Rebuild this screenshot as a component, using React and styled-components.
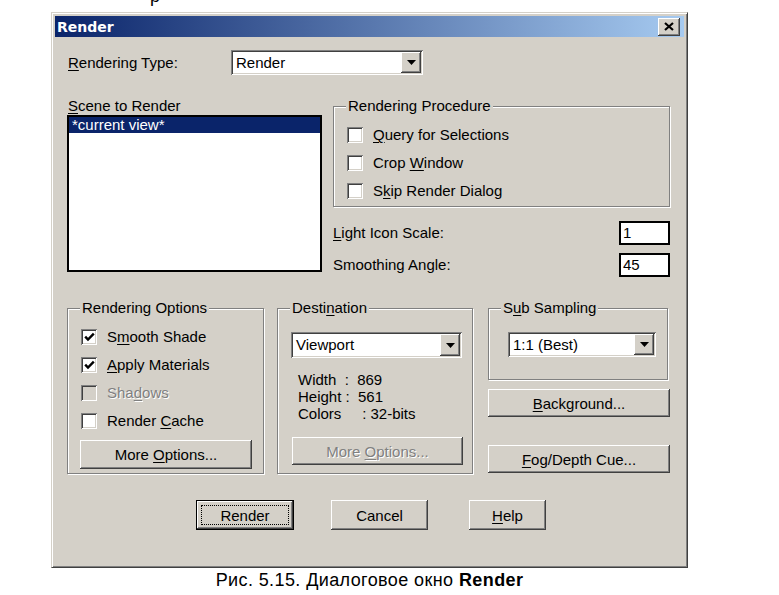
import React from "react";
import styled, { createGlobalStyle, css } from "styled-components";

const FACE = "#d4d0c8";
const SHADOW = "#808080";
const DARK = "#404040";
const HILITE = "#ffffff";
const NAVY = "#0a246a";

const GlobalStyle = createGlobalStyle`
  html, body { margin: 0; padding: 0; background: #ffffff; }
  body { font-family: "Liberation Sans", Arial, sans-serif; color: #000; }
  * { box-sizing: border-box; }
`;

const raised = css`
  background: ${FACE};
  box-shadow: inset -1px -1px ${DARK}, inset 1px 1px ${HILITE},
    inset -2px -2px ${SHADOW}, inset 2px 2px ${FACE};
`;

const sunken = css`
  box-shadow: inset 1px 1px ${SHADOW}, inset -1px -1px ${HILITE},
    inset 2px 2px ${DARK}, inset -2px -2px ${FACE};
`;

const Page = styled.div`
  width: 779px;
  height: 595px;
  overflow: hidden;
  padding-left: 51px;
`;

const Fragment = styled.div`
  height: 12px;
  overflow: hidden;
  padding-left: 99px;
  font-size: 18px;
  line-height: 12px;
`;

const FragmentText = styled.div`
  margin-top: -10px;
`;

const Window = styled.div`
  width: 637px;
  height: 556px;
  background: ${FACE};
  border: 1px solid;
  border-color: ${FACE} ${DARK} ${DARK} ${FACE};
  box-shadow: inset 1px 1px ${HILITE}, inset -1px -1px ${SHADOW};
  padding: 3px;
  display: flex;
  flex-direction: column;
`;

const TitleBar = styled.div`
  height: 21px;
  flex: none;
  background: linear-gradient(to right, ${NAVY}, #a6caf0);
  display: flex;
  align-items: center;
  justify-content: space-between;
  padding: 0 4px 0 2px;
`;

const Title = styled.span`
  font: bold 14px "DejaVu Sans", Verdana, sans-serif;
  color: #fff;
`;

const CloseButton = styled.div`
  width: 22px;
  height: 18px;
  ${raised};
  display: flex;
  align-items: center;
  justify-content: center;
`;

const Client = styled.div`
  flex: 1;
  padding: 13px 14px 0 12px;
  display: flex;
  flex-direction: column;
  font-size: 15px;
  line-height: 16px;

  u {
    text-decoration-thickness: 1px;
    text-underline-offset: 2px;
  }
`;

const TypeRow = styled.div`
  display: flex;
  align-items: center;
  height: 25px;
`;

const TypeLabel = styled.span`
  width: 164px;
  padding-left: 1px;
`;

const Select = styled.div`
  width: ${(p) => p.$w}px;
  height: ${(p) => p.$h}px;
  margin-top: ${(p) => p.$mt || 0}px;
  margin-left: ${(p) => p.$ml || 0}px;
  background: #fff;
  ${sunken};
  padding: 2px;
  display: flex;
  align-items: center;
  flex: none;
`;

const SelectText = styled.span`
  flex: 1;
  padding-left: 3px;
`;

const ArrowButton = styled.span`
  width: 20px;
  align-self: stretch;
  ${raised};
  display: flex;
  align-items: center;
  justify-content: center;
`;

const MiddleRow = styled.div`
  display: grid;
  grid-template-columns: 255px 337px;
  column-gap: 11px;
  margin-top: 23px;
`;

const Column = styled.div`
  display: flex;
  flex-direction: column;
`;

const PlainLabel = styled.div`
  height: 16px;
  padding-left: ${(p) => p.$pl || 0}px;
`;

const ListBox = styled.div`
  margin-top: 1px;
  height: 157px;
  background: #fff;
  border: 2px solid #000;
`;

const ListItem = styled.div`
  height: 16px;
  line-height: 16px;
  background: ${NAVY};
  color: #fff;
  padding-left: 3px;
`;

const Group = styled.div`
  margin-top: 8px;
  border: 1px solid ${SHADOW};
  box-shadow: inset 1px 1px ${HILITE}, 1px 1px ${HILITE};
  height: ${(p) => p.$h}px;
  display: flex;
  flex-direction: column;
`;

const GroupTitle = styled.div`
  margin: -9px 0 0 12px;
  padding: 0 2px;
  width: fit-content;
  height: 16px;
  line-height: 16px;
  background: ${FACE};
`;

const GroupBody = styled.div`
  padding: ${(p) => p.$pt || 0}px 0 0 ${(p) => p.$pl || 0}px;
  display: flex;
  flex-direction: column;
`;

const CheckRow = styled.div`
  display: flex;
  align-items: center;
  gap: 10px;
  height: 28px;
  color: ${(p) => (p.$disabled ? SHADOW : "#000")};
  text-shadow: ${(p) => (p.$disabled ? `1px 1px ${HILITE}` : "none")};
`;

const Box = styled.span`
  width: 16px;
  height: 16px;
  flex: none;
  background: ${(p) => (p.$disabled ? FACE : "#fff")};
  ${sunken};
  display: flex;
  align-items: center;
  justify-content: center;
`;

const FieldRow = styled.div`
  display: flex;
  align-items: center;
  justify-content: space-between;
  height: 24px;
  margin-top: ${(p) => p.$mt}px;
`;

const FieldInput = styled.div`
  width: 51px;
  height: 24px;
  background: #fff;
  border: 2px solid #000;
  padding-left: 2px;
  line-height: 20px;
`;

const BottomRow = styled.div`
  display: grid;
  grid-template-columns: 197px 196px 182px;
  column-gap: 13px;
  margin-top: 23px;
  grid-template-areas: "a b c";
  & > :nth-child(2) {
    margin-left: 0;
  }
`;

const SideStack = styled.div`
  display: flex;
  flex-direction: column;
  margin-left: 2px;
`;

const InfoText = styled.div`
  margin: 13px 0 0 7px;
  white-space: pre;
  line-height: 17px;
`;

const Button = styled.button`
  ${raised};
  border: none;
  padding: 0;
  font: 15px "Liberation Sans", Arial, sans-serif;
  width: ${(p) => p.$w}px;
  height: ${(p) => p.$h}px;
  margin-top: ${(p) => p.$mt || 0}px;
  margin-left: ${(p) => p.$ml || 0}px;
  flex: none;
  display: flex;
  align-items: center;
  justify-content: center;
  color: #000;

  &:disabled {
    color: ${SHADOW};
    text-shadow: 1px 1px ${HILITE};
  }

  ${(p) =>
    p.$default &&
    css`
      border: 1px solid #000;
      box-shadow: inset -1px -1px ${DARK}, inset 1px 1px ${HILITE},
        inset -2px -2px ${SHADOW}, inset 2px 2px ${FACE};
    `}
`;

const FocusRect = styled.span`
  display: flex;
  align-items: center;
  justify-content: center;
  width: calc(100% - 8px);
  height: calc(100% - 8px);
  border: 1px dotted #000;
`;

const ActionRow = styled.div`
  display: flex;
  align-items: center;
  margin-top: 26px;
  padding-left: 129px;
`;

const Caption = styled.div`
  width: 637px;
  text-align: center;
  font-size: 18px;
  line-height: 22px;
  letter-spacing: 0.4px;
  margin-top: 1px;

  b {
    font-weight: bold;
  }
`;

const Arrow = () => (
  <svg width="9" height="5" viewBox="0 0 9 5">
    <polygon points="0,0 9,0 4.5,5" fill="#000" />
  </svg>
);

const Check = () => (
  <svg width="11" height="10" viewBox="0 0 11 10">
    <polyline
      points="1.2,4.6 4,7.6 9.8,1.6"
      fill="none"
      stroke="#000"
      strokeWidth="2.4"
    />
  </svg>
);

const CloseGlyph = () => (
  <svg width="10" height="9" viewBox="0 0 10 9">
    <path d="M1 1 L9 8 M9 1 L1 8" stroke="#000" strokeWidth="2.2" />
  </svg>
);

const Checkbox = ({ checked, disabled, children }) => (
  <CheckRow $disabled={disabled}>
    <Box $disabled={disabled}>{checked && <Check />}</Box>
    <span>{children}</span>
  </CheckRow>
);

const Dropdown = ({ w, h, mt, ml, children }) => (
  <Select $w={w} $h={h} $mt={mt} $ml={ml}>
    <SelectText>{children}</SelectText>
    <ArrowButton>
      <Arrow />
    </ArrowButton>
  </Select>
);

export default function App() {
  return (
    <Page>
      <GlobalStyle />
      <Fragment>
        <FragmentText>р</FragmentText>
      </Fragment>
      <Window>
        <TitleBar>
          <Title>Render</Title>
          <CloseButton>
            <CloseGlyph />
          </CloseButton>
        </TitleBar>
        <Client>
          <TypeRow>
            <TypeLabel>
              <u>R</u>endering Type:
            </TypeLabel>
            <Dropdown w={192} h={25}>
              Render
            </Dropdown>
          </TypeRow>

          <MiddleRow>
            <Column>
              <PlainLabel $pl={1}>
                <u>S</u>cene to Render
              </PlainLabel>
              <ListBox>
                <ListItem>*current view*</ListItem>
              </ListBox>
            </Column>
            <Column>
              <Group $h={101}>
                <GroupTitle>Rendering Procedure</GroupTitle>
                <GroupBody $pt={7} $pl={13}>
                  <Checkbox>
                    <u>Q</u>uery for Selections
                  </Checkbox>
                  <Checkbox>
                    Crop <u>W</u>indow
                  </Checkbox>
                  <Checkbox>
                    S<u>k</u>ip Render Dialog
                  </Checkbox>
                </GroupBody>
              </Group>
              <FieldRow $mt={14}>
                <span>
                  <u>L</u>ight Icon Scale:
                </span>
                <FieldInput>1</FieldInput>
              </FieldRow>
              <FieldRow $mt={8}>
                <span>Smoothing Angle:</span>
                <FieldInput>45</FieldInput>
              </FieldRow>
            </Column>
          </MiddleRow>

          <BottomRow>
            <Group $h={166}>
              <GroupTitle>Rendering Options</GroupTitle>
              <GroupBody $pt={7} $pl={13}>
                <Checkbox checked>
                  S<u>m</u>ooth Shade
                </Checkbox>
                <Checkbox checked>
                  <u>A</u>pply Materials
                </Checkbox>
                <Checkbox disabled>
                  Sha<u>d</u>ows
                </Checkbox>
                <Checkbox>
                  Render <u>C</u>ache
                </Checkbox>
                <Button $w={172} $h={29} $mt={5} $ml={-1}>
                  <span>
                    More <u>O</u>ptions...
                  </span>
                </Button>
              </GroupBody>
            </Group>

            <Group $h={166}>
              <GroupTitle>
                Desti<u>n</u>ation
              </GroupTitle>
              <GroupBody $pl={13}>
                <Dropdown w={171} h={26} mt={16}>
                  Viewport
                </Dropdown>
                <InfoText>
                  {"Width  :  869\nHeight :  561\nColors     : 32-bits"}
                </InfoText>
                <Button disabled $w={171} $h={28} $mt={15} $ml={1}>
                  <span>
                    More <u>O</u>ptions...
                  </span>
                </Button>
              </GroupBody>
            </Group>

            <SideStack>
              <Group $h={72}>
                <GroupTitle>
                  S<u>u</u>b Sampling
                </GroupTitle>
                <GroupBody $pl={19}>
                  <Dropdown w={148} h={25} mt={16}>
                    1:1 (Best)
                  </Dropdown>
                </GroupBody>
              </Group>
              <Button $w={182} $h={28} $mt={9}>
                <span>
                  <u>B</u>ackground...
                </span>
              </Button>
              <Button $w={182} $h={28} $mt={28}>
                <span>
                  <u>F</u>og/Depth Cue...
                </span>
              </Button>
            </SideStack>
          </BottomRow>

          <ActionRow>
            <Button $default $w={98} $h={30}>
              <FocusRect>Render</FocusRect>
            </Button>
            <Button $w={97} $h={30} $ml={37}>
              Cancel
            </Button>
            <Button $w={77} $h={30} $ml={41}>
              <span>
                <u>H</u>elp
              </span>
            </Button>
          </ActionRow>
        </Client>
      </Window>
      <Caption>
        Рис. 5.15. Диалоговое окно <b>Render</b>
      </Caption>
    </Page>
  );
}
